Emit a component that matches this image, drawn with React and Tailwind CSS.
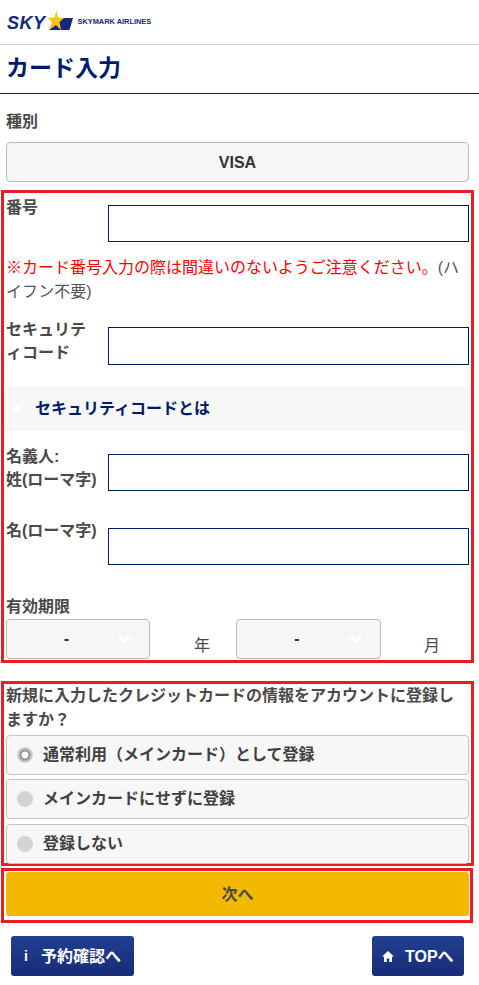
import { Plus } from "lucide-react";

const font = { fontFamily: '"Liberation Sans", "Noto Sans CJK JP", sans-serif' };

const Field = ({ label, className = "", inputClass = "h-[37px]" }) => (
  <div className={`flex ${className}`}>
    <div className="-mt-[9px] w-[102px] shrink-0 text-base leading-[23px] font-bold text-[#4a4a4a]">{label}</div>
    <input className={`w-[361px] border border-[#001a6e] bg-white ${inputClass}`} />
  </div>
);

const Select = ({ className = "" }) => (
  <div className={`relative flex h-10 items-center rounded border border-[#bbbbbb] bg-[#f6f6f6] ${className}`}>
    <span className="w-full pr-[23px] text-center text-base font-bold text-[#333333]">-</span>
    <svg className="absolute top-[15px] right-[18px]" width="13" height="9" viewBox="0 0 13 9">
      <path d="M1.5 1.5 L6.5 6.5 L11.5 1.5" fill="none" stroke="#ffffff" strokeWidth="3" />
    </svg>
  </div>
);

const Option = ({ label, checked, className = "" }) => (
  <div className={`flex h-10 items-center rounded border border-[#c4c4c4] bg-[#f7f7f7] pl-[10px] ${className}`}>
    {checked ? (
      <span className="size-4 rounded-full bg-[radial-gradient(circle,#ffffff_0,#ffffff_3px,#888888_4px,#bbbbbb_6px,#dddddd_8px)]" />
    ) : (
      <span className="size-4 rounded-full bg-[#d4d4d4]" />
    )}
    <span className="ml-[10px] text-base font-bold text-[#404040]">{label}</span>
  </div>
);

export default function App() {
  return (
    <div className="h-[985px] w-[479px] overflow-hidden bg-white" style={font}>
      <header className="flex h-[45px] items-center border-b border-[#cccccc] pl-[7px]">
        <span className="mt-[2px] text-[18px] leading-none font-bold tracking-[0.5px] text-[#14287f] italic">SKY</span>
        <svg width="26" height="19" viewBox="0 0 26 19" className="mb-[3px] ml-[1px]">
          <polygon points="13,7 26,7 22.5,19 2,19" fill="#14287f" />
          <polygon points="9.5,0 11,6.5 17,7 12.5,11 14,19 9,14 2,19 5,11 0.5,7 7.5,6.5" fill="#f6c218" />
        </svg>
        <span className="ml-[5px] text-[7.4px] font-bold text-[#14287f]">SKYMARK AIRLINES</span>
      </header>

      <h1 className="flex h-[49px] items-center border-b border-[#001a6e] pb-[2px] pl-[6px] text-[23px] font-bold text-[#001a6e]">カード入力</h1>

      <div className="mt-[16px] pl-[6px] text-base leading-6 font-bold text-[#4a4a4a]">種別</div>
      <div className="mx-[6px] mt-[8px] flex h-10 w-[463px] items-center justify-center rounded border border-[#bbbbbb] bg-[#f6f6f6] pt-[1px] text-base font-bold text-[#333333]">
        VISA
      </div>

      <section className="mt-[8px] ml-[1px] h-[473px] w-[473px] border-[3px] border-[#ed1c24] px-[2px] pt-[12px]">
        <Field label="番号" />
        <p className="mt-[14px] text-base leading-6 text-[#555555]">
          <span className="text-[#ff0000]">※カード番号入力の際は間違いのないようご注意ください。</span>(ハイフン不要)
        </p>
        <Field label={<>セキュリテ<br />ィコード</>} className="mt-[23px]" inputClass="h-[38px]" />
        <div className="-mx-[2px] mt-[22px] flex h-[44px] items-center bg-[#f7f7f7]">
          <Plus className="ml-[5px] size-[14px] text-white" strokeWidth={4} />
          <span className="ml-[12px] text-base font-bold text-[#001a6e]">セキュリティコードとは</span>
        </div>
        <Field label={<>名義人:<br />姓(ローマ字)</>} className="mt-[23px]" />
        <Field label="名(ローマ字)" className="mt-[37px]" />
        <div className="mt-[30px] text-base leading-6 font-bold text-[#4a4a4a]">有効期限</div>
        <div className="flex">
          <Select className="w-[144px]" />
          <span className="mt-[15px] w-[86px] pl-[44px] text-base leading-6 text-[#4a4a4a]">年</span>
          <Select className="w-[145px]" />
          <span className="mt-[15px] pl-[43px] text-base leading-6 text-[#4a4a4a]">月</span>
        </div>
      </section>

      <section className="mt-[18px] ml-[1px] h-[185px] w-[473px] border-[3px] border-[#ed1c24] px-[2px]">
        <p className="text-base leading-6 font-bold text-[#4a4a4a]">
          新規に入力したクレジットカードの情報をアカウントに登録しますか？
        </p>
        <Option label="通常利用（メインカード）として登録" checked className="mt-[3px]" />
        <Option label="メインカードにせずに登録" className="mt-[4px]" />
        <Option label="登録しない" className="mt-[5px]" />
      </section>

      <section className="mt-[2px] ml-[1px] h-[55px] w-[472px] border-[3px] border-[#ed1c24] px-[2px] pt-[1px]">
        <div className="flex h-[44px] w-[463px] items-center justify-center rounded-[3px] bg-[#f3b900] pt-[1px] text-base font-bold text-[#4a4a4a]">次へ</div>
      </section>

      <div className="mt-[13px] flex justify-between pr-[15px] pl-[11px]">
        <div className="flex h-10 w-[123px] items-center rounded-[3px] bg-gradient-to-b from-[#20408f] to-[#182c78] pt-[1px] pl-[13px] text-base font-bold text-white">
          <span className="text-[14px]">i</span>
          <span className="ml-[13px]">予約確認へ</span>
        </div>
        <div className="flex h-10 w-[92px] items-center rounded-[3px] bg-gradient-to-b from-[#20408f] to-[#182c78] pt-[1px] pl-[10px] text-base font-bold text-white">
          <svg width="12" height="11" viewBox="0 0 12 11">
            <polygon points="6,0 12,5.5 10,5.5 10,11 7.2,11 7.2,7.5 4.8,7.5 4.8,11 2,11 2,5.5 0,5.5" fill="#ffffff" />
          </svg>
          <span className="ml-[11px]">TOPへ</span>
        </div>
      </div>
    </div>
  );
}
